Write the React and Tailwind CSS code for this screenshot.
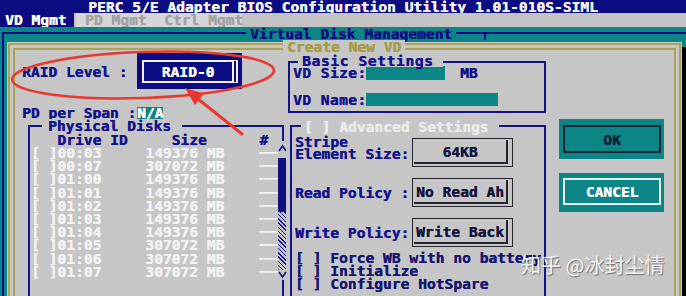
const disks = [
  ["00:03", "149376"],
  ["00:07", "307072"],
  ["01:00", "149376"],
  ["01:01", "149376"],
  ["01:02", "149376"],
  ["01:03", "149376"],
  ["01:04", "149376"],
  ["01:05", "307072"],
  ["01:06", "307072"],
  ["01:07", "307072"],
];

function Btn({ children }) {
  return (
    <div className="shrink-0 w-[101px] h-[29px] border border-[#26262e]">
      <div className="mt-[1px] ml-[1px] w-[94px] h-[24px] border-r-2 border-b-2 border-[#26262e] flex items-center justify-center text-[#14143c] leading-[13px] whitespace-pre">
        {children}
      </div>
    </div>
  );
}

export default function App() {
  return (
    <div className="relative w-[686px] h-[296px] overflow-hidden bg-[#0b8585] font-['DejaVu_Sans_Mono',monospace] font-bold text-[14.6px] [text-shadow:0.4px_0_0_currentColor]">
      <div className="flex flex-col h-full">
        {/* title bar */}
        <div className="shrink-0 h-[13px] pt-[1px] bg-[#0c0c82] text-[#f4f4f4] leading-[12px] text-center whitespace-pre">
          PERC 5/E Adapter BIOS Configuration Utility 1.01-010S-SIML
        </div>
        {/* tabs */}
        <div className="shrink-0 h-[14px] flex bg-[#c4c4c4] leading-[14px]">
          <div className="w-[74px] bg-[#0c0c82] text-white pl-[5px] whitespace-pre">VD Mgmt</div>
          <div className="ml-[2px] w-[166px] bg-[#d6d6d6] text-[#a2a2a2] pl-[9px] whitespace-pre">PD Mgmt  Ctrl Mgmt</div>
        </div>
        {/* panel */}
        <div className="flex-1 min-h-0 bg-[#0b8585] pt-[5px] pl-[2px]">
          <div className="relative h-full border-t-2 border-l-2 border-[#0c0c82] pt-[8px] pl-[3px] flex">
            <div className="absolute left-[242px] top-[-7px] px-[4px] bg-[#0b8585] text-[#0c0c82] leading-[13px] whitespace-pre">
              Virtual Disk Management
            </div>
            <div className="absolute left-[480px] top-0 w-[2px] h-[6px] bg-[#0c0c82]" />
            {/* dialog */}
            <div className="shrink-0 w-[675px] h-full bg-[#c6c6c6] pt-[1px] px-[1px]">
              <div className="relative h-full border-[7px] border-b-0 border-double border-[#aca353] flex">
                <div className="absolute left-[268px] top-[-10px] px-[4px] bg-[#c6c6c6] text-[#a39b45] leading-[13px] whitespace-pre">
                  Create New VD
                </div>
                {/* left column */}
                <div className="shrink-0 w-[273px] h-full flex flex-col">
                  <div className="shrink-0 mt-[3px] h-[36px] flex items-center">
                    <div className="w-[122px] pl-[7px] text-[#14148a] leading-[13px] whitespace-pre">RAID Level :</div>
                    <div className="w-[105px] h-full bg-[#0c0c82] pt-[7px] pl-[5px] pr-[4px] pb-[6px]">
                      <div className="h-full border-2 border-[#f0f0f0] border-r-[6px] [border-right-style:double] flex items-center justify-center text-white leading-[13px]">
                        RAID-0
                      </div>
                    </div>
                  </div>
                  <div className="shrink-0 mt-[17px] h-[13px] flex items-center">
                    <div className="w-[122px] pl-[7px] text-[#14148a] leading-[13px] whitespace-pre">PD per Span :</div>
                    <div className="h-[12px] leading-[12px] bg-[#0b8585] text-white">N/A</div>
                  </div>
                  {/* physical disks */}
                  <div className="mt-[6px] ml-[13px] flex flex-1 min-h-0">
                    <div className="relative w-[250px] h-full border-t-2 border-l-2 border-[#14148a] pt-[6px] pl-[1px]">
                      <div className="absolute left-[12px] top-[-8px] pl-[6px] pr-[11px] bg-[#c6c6c6] text-[#14148a] leading-[13px] whitespace-pre">
                        Physical Disks
                      </div>
                      <div className="leading-[13px] text-[#14148a] whitespace-pre">   Drive ID     Size      #</div>
                      {disks.map(([id, size]) => (
                        <div key={id} className="leading-[13.2px] text-[#f2f2f2] whitespace-pre">
                          {`[ ]${id}     ${size} MB    ──`}
                        </div>
                      ))}
                    </div>
                    {/* scroll column */}
                    <div className="w-[9px] h-full flex flex-col">
                      <div className="w-[6px] h-[16px] shrink-0 border-t-2 border-r-2 border-[#14148a]" />
                      <svg className="shrink-0" width="9" height="17" viewBox="0 0 9 17">
                        <polyline points="1,10 4.5,5 8,10" fill="none" stroke="#14148a" strokeWidth="1.6" />
                      </svg>
                      <div className="w-[8px] h-[54px] shrink-0 bg-[#10107e]" />
                      <div className="w-[8px] h-[58px] shrink-0 bg-[repeating-linear-gradient(45deg,#14148a_0px,#14148a_1px,#c6c6c6_1px,#c6c6c6_3px)]" />
                      <svg className="shrink-0" width="9" height="10" viewBox="0 0 9 10">
                        <polyline points="1,2 4.5,7 8,2" fill="none" stroke="#14148a" strokeWidth="1.6" />
                      </svg>
                      <div className="ml-[4px] w-[2px] flex-1 bg-[#14148a]" />
                    </div>
                  </div>
                </div>
                {/* middle column */}
                <div className="shrink-0 w-[258px] h-full flex flex-col">
                  <div className="shrink-0 relative mt-[11px] h-[52px] border-2 border-[#14148a] pl-[3px] pt-[3px] text-[#14148a]">
                    <div className="absolute left-[8px] top-[-9px] bg-[#c6c6c6] pl-[4px] pr-[10px] leading-[13px] tracking-[0.6px] whitespace-pre">
                      Basic Settings
                    </div>
                    <div className="flex items-center h-[14px]">
                      <div className="w-[73px] leading-[14px] tracking-[0.4px] whitespace-pre">VD Size:</div>
                      <div className="w-[79px] h-[14px] bg-[#0b8585]" />
                      <div className="ml-[15px] leading-[14px]">MB</div>
                    </div>
                    <div className="flex items-center h-[13px] mt-[13px]">
                      <div className="w-[73px] leading-[13px] tracking-[0.4px] whitespace-pre">VD Name:</div>
                      <div className="w-[132px] h-[13px] bg-[#0b8585]" />
                    </div>
                  </div>
                  <div className="relative ml-[2px] mt-[12px] flex-1 min-h-0 border-t-2 border-x-2 border-[#14148a] pl-[3px] pt-[11px] text-[#14148a]">
                    <div className="absolute left-[9px] top-[-7px] bg-[#c6c6c6] pl-[3px] pr-[10px] text-[#ececec] leading-[13px] whitespace-pre">
                      [ ] Advanced Settings
                    </div>
                    <div className="flex items-end h-[29px]">
                      <div className="w-[117px] leading-[12px] pb-[7px] whitespace-pre">
                        <div>Stripe</div>
                        <div>Element Size:</div>
                      </div>
                      <Btn>64KB</Btn>
                    </div>
                    <div className="flex items-center h-[29px] mt-[11px]">
                      <div className="w-[117px] leading-[13px] whitespace-pre">Read Policy :</div>
                      <Btn>No Read Ah</Btn>
                    </div>
                    <div className="flex items-center h-[29px] mt-[11px]">
                      <div className="w-[117px] leading-[13px] whitespace-pre">Write Policy:</div>
                      <Btn>Write Back</Btn>
                    </div>
                    <div className="mt-[4px] leading-[13px] text-[#161670] whitespace-pre">
                      <div>[ ] Force WB with no battery</div>
                      <div>[ ] Initialize</div>
                      <div>[ ] Configure HotSpare</div>
                    </div>
                  </div>
                </div>
                {/* right column */}
                <div className="shrink-0 ml-[13px] mt-[69px] w-[105px] flex flex-col">
                  <div className="shrink-0 h-[40px] bg-[#0b8585] pt-[6px] pl-[4px] pr-[3px] pb-[6px]">
                    <div className="h-full border-2 border-[#0d2233] flex items-center justify-center text-[#0d1a33] leading-[13px]">
                      OK
                    </div>
                  </div>
                  <div className="shrink-0 mt-[14px] h-[39px] bg-[#0b8585] pt-[5px] pl-[4px] pr-[3px] pb-[7px]">
                    <div className="h-full border-2 border-[#e6f6f6] flex items-center justify-center text-white leading-[13px]">
                      CANCEL
                    </div>
                  </div>
                </div>
              </div>
            </div>
            <div className="shrink-0 w-[4px] mt-[5px] h-full bg-black" />
          </div>
        </div>
      </div>

      {/* red annotation */}
      <svg className="absolute inset-0 pointer-events-none" width="686" height="296" viewBox="0 0 686 296">
        <ellipse cx="143" cy="75" rx="131" ry="23" transform="rotate(-2 143 75)" fill="none" stroke="#e8392f" strokeWidth="2.5" />
        <line x1="242" y1="134" x2="198" y2="99" stroke="#e8392f" strokeWidth="3" strokeLinecap="round" />
        <polygon points="185,88 204,93.5 195,105" fill="#e8392f" />
      </svg>

      {/* watermark */}
      <div className="absolute left-[521px] top-[253px] text-[20px] leading-[24px] font-normal text-[#f5f5f5] font-['Noto_Sans_CJK_SC',sans-serif] [text-shadow:1px_1px_1px_rgba(0,0,0,0.45)] whitespace-pre">
        知乎 @冰封尘情
      </div>
    </div>
  );
}
